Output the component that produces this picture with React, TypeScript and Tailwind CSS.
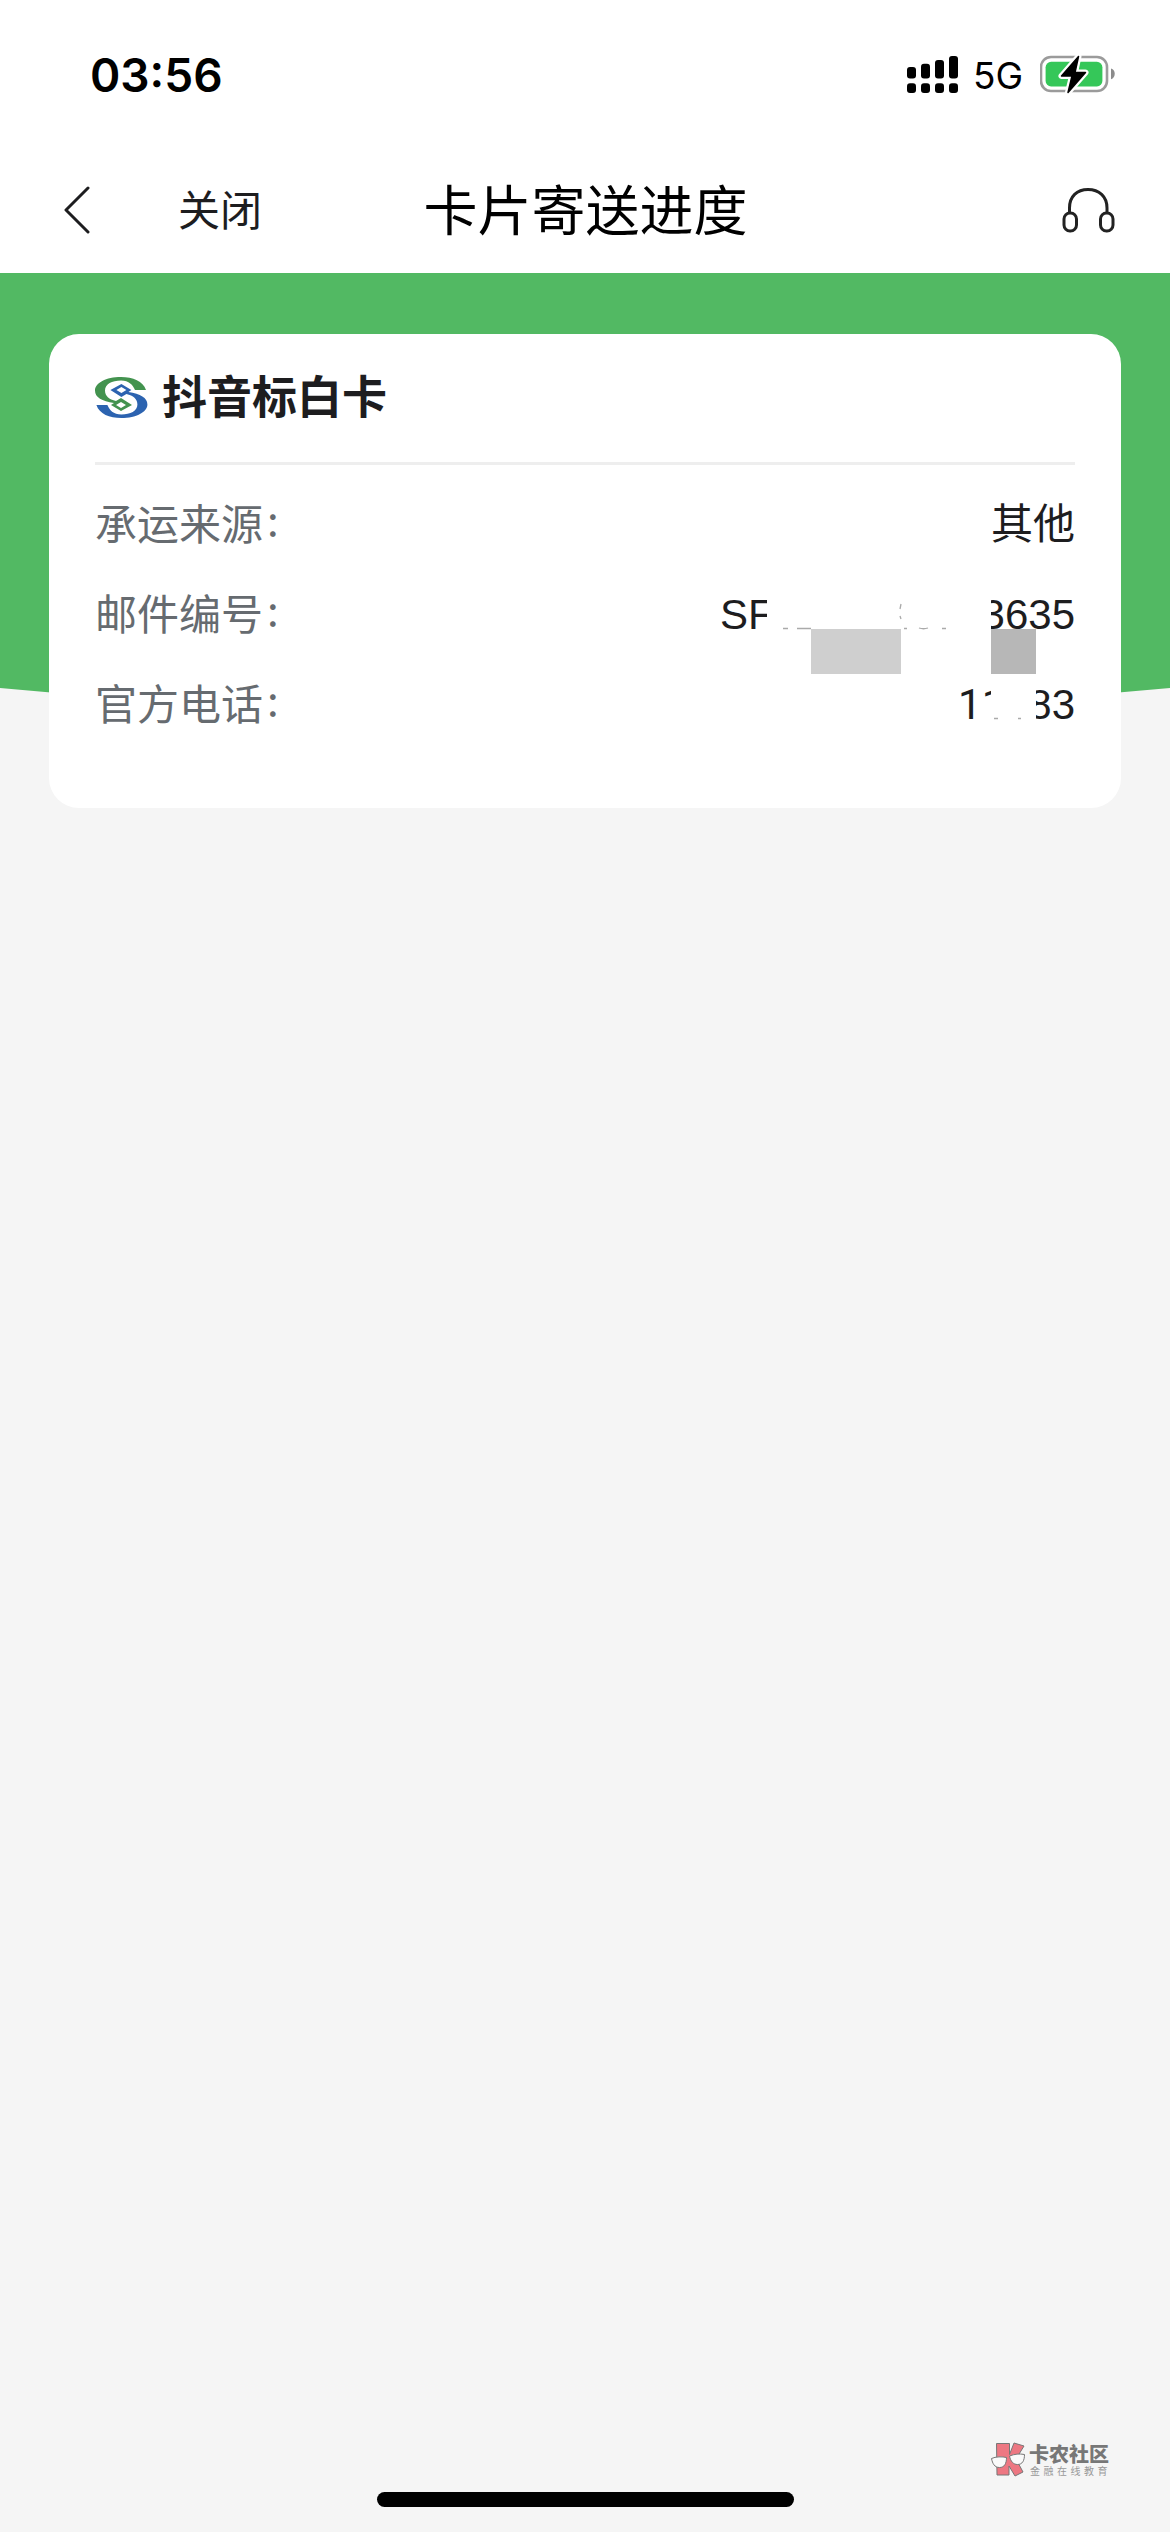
import type { ReactNode } from 'react';

type InfoRowProps = {
    label: string;
    children: ReactNode;
};

function StatusBar() {
    return (
        <div className="flex h-[150px] items-start justify-between bg-white pt-[44px] pr-[54px] pl-[90px]">
            <span className="pt-px font-['Inter',sans-serif] text-[46px] leading-[60px] font-semibold text-black">03:56</span>
            <div className="flex h-[60px] items-center">
                <svg className="h-[60px] w-[52px]" viewBox="907 44 52 60" aria-hidden="true">
                    <rect x="907" y="67" width="9" height="11.5" rx="3" />
                    <rect x="921" y="63.8" width="9" height="14.7" rx="3" />
                    <rect x="935" y="60" width="9" height="18.5" rx="3" />
                    <rect x="949" y="56" width="9" height="22.5" rx="3" />
                    <rect x="907" y="83.3" width="9" height="9.7" rx="3" />
                    <rect x="921" y="83.3" width="9" height="9.7" rx="3" />
                    <rect x="935" y="83.3" width="9" height="9.7" rx="3" />
                    <rect x="949" y="83.3" width="9" height="9.7" rx="3" />
                </svg>
                <span className="ml-[14px] w-[67px] pt-[4px] font-['Inter',sans-serif] text-[37px] leading-[60px] text-black">5G</span>
                <svg className="h-[60px] w-[76px]" viewBox="1040 44 76 60" aria-hidden="true">
                    <rect x="1041" y="57" width="66" height="34" rx="10" fill="none" stroke="#9b9b9b" strokeWidth="2.6" />
                    <rect x="1045.6" y="61.8" width="56.8" height="24.6" rx="5.5" fill="#35c759" />
                    <path d="M1111 68.5c5 1.5 5 9 0 10.8z" fill="#8c8c8c" />
                    <path
                        d="M1078.5 56.5 1061.5 76h10.5l-4 16.5L1085.5 72.5h-10.5z"
                        stroke="#fff"
                        strokeWidth="6"
                        strokeLinejoin="round"
                    />
                    <path d="M1078.5 56.5 1061.5 76h10.5l-4 16.5L1085.5 72.5h-10.5z" stroke="#000" strokeWidth="1.5" strokeLinejoin="round" />
                </svg>
            </div>
        </div>
    );
}

function NavBar() {
    return (
        <header className="grid h-[123px] grid-cols-[1fr_auto_1fr] items-center bg-white pr-[55px] pb-[3px] pl-[64px]">
            <div className="flex items-center">
                <svg className="h-[48px] w-[28px]" viewBox="0 0 28 48" fill="none" stroke="#1d1d1f" strokeWidth="3" strokeLinecap="round" strokeLinejoin="round">
                    <path d="M24 2 2 24 24 46" />
                </svg>
                <span className="ml-[86px] pb-[4px] text-[42px] leading-[60px] text-[#1d1d1f]">关闭</span>
            </div>
            <h1 className="-ml-[8px] pb-[5px] text-[54px] leading-[72px] text-black">卡片寄送进度</h1>
            <svg className="h-[46px] w-[54px] justify-self-end" viewBox="0 0 54 46" fill="none" stroke="#222" strokeWidth="3">
                <path d="M8.5 26V21C8.5 9.5 16 2.5 27 2.5S46 9.5 46 21V26" />
                <rect x="3" y="26" width="12.5" height="18" rx="6" />
                <rect x="39.5" y="26" width="12.5" height="18" rx="6" />
            </svg>
        </header>
    );
}

const LOGO_HALF =
    'M51 13C48 4 38 0 26 0 11 0 0 6 0 13.5c0 7 7 10.500 19 12.5l-3 2 10 6 11-6-11-7-5 3C14 22.5 10 19 10 13.5 10 7 17 3.5 26 3.5 34 3.5 38 8 40 13zM26 25l5 3-5 3-5-3z';

function BankLogo() {
    return (
        <svg className="mb-[2px] h-[41px] w-[53px]" viewBox="0 0 53 41" aria-hidden="true">
            <path d={LOGO_HALF} fill="#43934f" fillRule="evenodd" />
            <path d={LOGO_HALF} fill="#2c63b0" fillRule="evenodd" transform="rotate(180 26.2 20.5)" />
        </svg>
    );
}

function InfoRow({ label, children }: InfoRowProps) {
    return (
        <div className="flex h-[90px] items-center justify-between text-[42px] leading-[60px]">
            <span className="pb-[4px] text-[#666b70]">
                {label}
                <span className="relative -top-[4px] ml-[4px]">:</span>
            </span>
            <div className="relative flex pt-[2px] font-['Liberation_Sans','Noto_Sans_CJK_SC',sans-serif] text-[#1d1d1f]">{children}</div>
        </div>
    );
}

// Mosaic cells and the slivers of digits that stay visible around them
function TrackingMask() {
    return (
        <svg className="absolute top-0 right-0 h-[92px] w-[358px]" viewBox="716 584 358 92" aria-hidden="true">
            <rect x="766" y="590" width="12" height="45" fill="#fff" />
            <rect x="975" y="590" width="15" height="45" fill="#fff" />
            <rect x="810" y="630" width="90" height="45" fill="#cfcfcf" />
            <rect x="990" y="630" width="45" height="45" fill="#b7b7b7" />
            <path d="M782 629.5h5M796 629.5h14M903 629.5h3M918 629c3 1 6 1 9 0M941 629.5h4M900 605l-1 5M899 617l1 3" fill="none" stroke="#aaa" strokeWidth="1.3" />
        </svg>
    );
}

function PhoneMask() {
    return (
        <svg className="absolute top-0 right-0 h-[60px] w-[118px]" viewBox="956 674 118 60" aria-hidden="true">
            <path d="M978 700h12V684h45v43H978z" fill="#fff" />
            <path d="M993 719.5h4M1017 719.5h3" fill="none" stroke="#aaa" strokeWidth="1.3" />
        </svg>
    );
}

function ShippingCard() {
    return (
        <section className="mx-[49px] mt-[61px] h-[474px] self-start rounded-[30px] bg-white px-[46px]">
            <div className="flex h-[131px] items-center gap-[14px] border-b-[3px] border-[#eee]">
                <BankLogo />
                <h2 className="pb-[6px] text-[45px] leading-[60px] font-bold text-[#1d1d1f]">抖音标白卡</h2>
            </div>
            <div className="pt-[14px]">
                <InfoRow label="承运来源">
                    <span>其他</span>
                </InfoRow>
                <InfoRow label="邮件编号">
                    <span>SF</span>
                    <span className="ml-[208px]">3635</span>
                    <TrackingMask />
                </InfoRow>
                <InfoRow label="官方电话">
                    <span className="font-['Roboto',sans-serif]">11</span>
                    <span className="ml-[23px]">83</span>
                    <PhoneMask />
                </InfoRow>
            </div>
        </section>
    );
}

function CommunityMark() {
    return (
        <div className="flex items-center gap-[3px] pr-[59px]">
            <svg className="h-[36px] w-[35px]" viewBox="0 0 35 36" stroke="#777" strokeWidth="1" aria-hidden="true">
                <path d="M5.5 1.500h13v11L23 1l10 3-8 13 7 13-8 4-6-10v9H6z" fill="#ed7782" />
                <path d="M.5 16.500c4-2 11-2 15-1 0 6-2 10-7 10s-7-4-8-9zM18.500 14c5-2 10-2.500 15-1.500 0 6-2 10-7 10-4 0-7-3-8-8.500z" fill="#fafafa" />
            </svg>
            <div className="flex flex-col text-[#777]">
                <span className="text-[20px] leading-[21px] font-black">卡农社区</span>
                <span className="pl-[1px] text-[10px] leading-[14px] tracking-[3.5px] text-[#999]">金融在线教育</span>
            </div>
        </div>
    );
}

export default function App() {
    return (
        <div className="flex h-[2532px] w-[1170px] flex-col overflow-hidden bg-[#f5f5f5] font-['Noto_Sans_CJK_SC',sans-serif]">
            <StatusBar />
            <NavBar />
            <main className="grid flex-1 grid-cols-1 content-start">
                <svg className="col-start-1 row-start-1 h-[450px] w-full" viewBox="0 0 1170 450" aria-hidden="true">
                    <path d="M0 0H1170V415Q585 470 0 415Z" fill="#52b963" />
                </svg>
                <div className="z-10 col-start-1 row-start-1 grid">
                    <ShippingCard />
                </div>
            </main>
            <footer className="flex h-[90px] flex-col items-end justify-between pb-[25px]">
                <CommunityMark />
                <div className="h-[15px] w-[417px] self-center rounded-full bg-black" />
            </footer>
        </div>
    );
}
